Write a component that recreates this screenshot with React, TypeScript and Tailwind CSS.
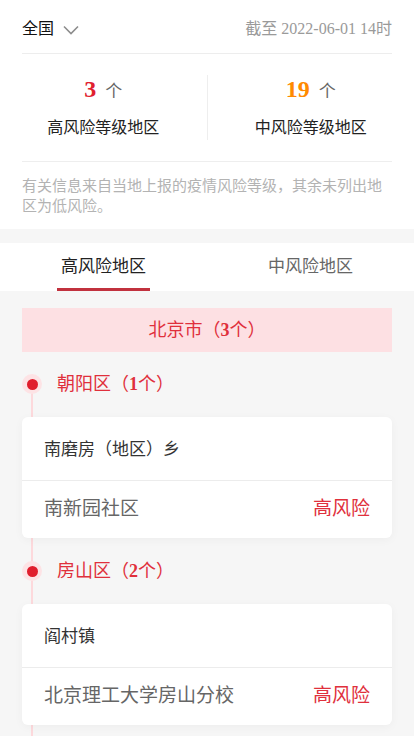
const districts = [
    {
        name: '朝阳区',
        count: 1,
        streets: [{ town: '南磨房（地区）乡', place: '南新园社区' }],
    },
    {
        name: '房山区',
        count: 2,
        streets: [{ town: '阎村镇', place: '北京理工大学房山分校' }],
    },
]

function Chevron() {
    return (
        <svg width="16" height="10" viewBox="0 0 16 10" fill="none" className="ml-[9px] mt-[2px]">
            <polyline points="1,1.5 8,8.5 15,1.5" stroke="#8c8c8c" strokeWidth="1.6" />
        </svg>
    )
}

export default function App() {
    return (
        <div className="min-h-screen w-full bg-[#f6f6f6] font-['Liberation_Serif','Noto_Sans_CJK_SC',serif]">
            {/* summary */}
            <section className="bg-white">
                <div className="mx-[22px] flex h-[54px] items-center justify-between border-b border-[#ededed] pt-[4px]">
                    <div className="flex items-center text-[16px] text-[#111]">
                        全国
                        <Chevron />
                    </div>
                    <span className="text-[16px] text-[#9a9a9a]">截至 2022-06-01 14时</span>
                </div>

                <div className="flex pt-[21px]">
                    <div className="flex-1 text-center">
                        <div className="h-[28px] leading-[28px]">
                            <span className="text-[24px] font-bold text-[#e0202e]">3</span>
                            <span className="ml-[9px] text-[17px] text-[#666]">个</span>
                        </div>
                        <p className="mt-[13px] text-[16px] leading-[24px] text-[#222]">高风险等级地区</p>
                    </div>
                    <div className="flex-1 border-l border-[#eeeeee] text-center">
                        <div className="h-[28px] leading-[28px]">
                            <span className="text-[24px] font-bold text-[#ff8a00]">19</span>
                            <span className="ml-[9px] text-[17px] text-[#666]">个</span>
                        </div>
                        <p className="mt-[13px] text-[16px] leading-[24px] text-[#222]">中风险等级地区</p>
                    </div>
                </div>

                <div className="mx-[22px] mt-[21px] border-t border-[#eeeeee] pb-[13px] pt-[14px]">
                    <p className="text-[15px] leading-[20px] text-[#b3b3b3]">
                        有关信息来自当地上报的疫情风险等级，其余未列出地区为低风险。
                    </p>
                </div>
            </section>

            {/* tabs */}
            <nav className="mt-[14px] flex h-[48px] bg-white">
                <button className="flex flex-1 flex-col items-center justify-between">
                    <span className="pt-[12px] text-[17px] leading-[24px] text-[#222]">高风险地区</span>
                    <span className="h-[3px] w-[93px] bg-[#c1313e]" />
                </button>
                <button className="flex flex-1 flex-col items-center">
                    <span className="pt-[12px] text-[17px] leading-[24px] text-[#666]">中风险地区</span>
                </button>
            </nav>

            {/* list */}
            <main className="px-[22px] pt-[17px]">
                <div className="flex h-[44px] items-center justify-center bg-[#fde0e3] text-[18px] text-[#e0303c]">
                    北京市（<span className="font-bold">3</span>个）
                </div>

                <div className="relative mt-[16px]">
                    <span className="absolute bottom-0 left-[9px] top-[16px] w-[2px] bg-[#fdd9dc]" />
                    {districts.map((d, i) => (
                        <div key={d.name} className={i > 0 ? 'mt-[17px]' : ''}>
                            <div className="relative flex h-[32px] items-center">
                                <span className="flex h-[20px] w-[20px] items-center justify-center rounded-full bg-[#fde3e5]">
                                    <span className="h-[11px] w-[11px] rounded-full bg-[#e01e2d]" />
                                </span>
                                <span className="ml-[15px] text-[18px] text-[#e0303c]">
                                    {d.name}（<span className="font-bold">{d.count}</span>个）
                                </span>
                            </div>
                            {d.streets.map((s) => (
                                <div
                                    key={s.town}
                                    className="relative mt-[17px] rounded-[6px] bg-white shadow-[0_2px_10px_rgba(0,0,0,0.04)]"
                                >
                                    <div className="flex h-[64px] items-center border-b border-[#ececec] px-[22px] pt-[2px] text-[17px] text-[#333]">
                                        {s.town}
                                    </div>
                                    <div className="flex h-[57px] items-center justify-between px-[22px] text-[19px]">
                                        <span className="text-[#666]">{s.place}</span>
                                        <span className="text-[#e0303c]">高风险</span>
                                    </div>
                                </div>
                            ))}
                        </div>
                    ))}
                    <div className="h-[20px]" />
                </div>
            </main>
        </div>
    )
}
